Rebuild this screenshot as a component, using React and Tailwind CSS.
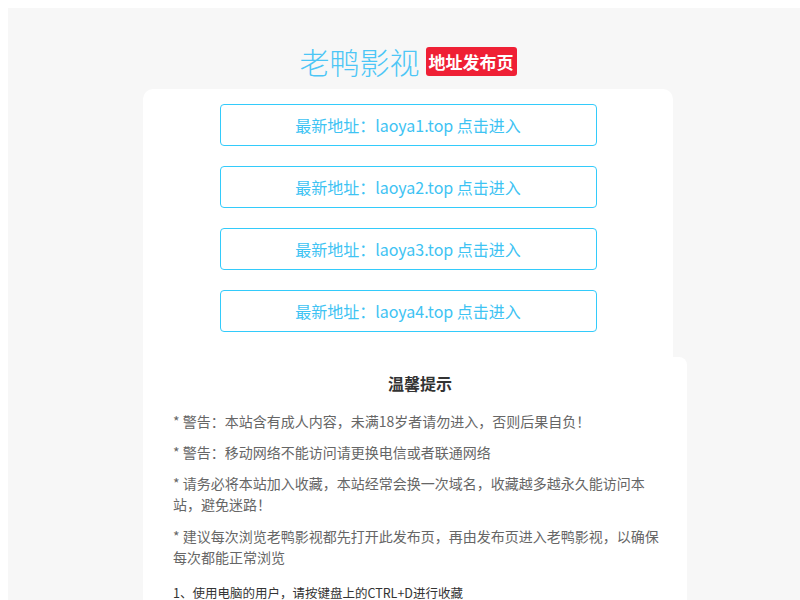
export default function App() {
  const links = ["laoya1.top", "laoya2.top", "laoya3.top", "laoya4.top"];
  return (
    <div
      className="w-[800px] h-[600px] overflow-hidden bg-white pt-2 pl-2"
      style={{ fontFamily: '"Noto Sans CJK SC", "Noto Sans", sans-serif' }}
    >
      <div className="w-[800px] min-h-[600px] bg-[#f7f7f7] flex flex-col items-center pt-[38px]">
        <div className="h-[30px] flex items-center gap-[6px] mb-[13px]">
          <span className="text-[30px] leading-none font-light text-[#4cc6f6]">老鸭影视</span>
          <span className="h-[29px] px-[3px] flex items-center rounded-[3px] bg-[#ef2035] text-white text-[17px] font-bold leading-none">
            地址发布页
          </span>
        </div>
        <div className="w-[530px] flex flex-col">
          <div className="w-[530px] bg-white rounded-t-[10px] pt-[15px] pb-[25px] flex flex-col items-center gap-[20px]">
            {links.map((l) => (
              <div
                key={l}
                className="w-[377px] h-[42px] border border-[#33cbfb] rounded-[4px] flex items-center justify-center text-[16px] text-[#3ec3f3]"
              >
                最新地址：{l} 点击进入
              </div>
            ))}
          </div>
          <div className="w-[544px] bg-white rounded-tr-[8px] pt-[15px] pl-[30px] pr-[20px] pb-4">
            <div className="text-center text-[16px] leading-[22px] font-bold text-[#333] mb-[17px]">温馨提示</div>
            <p className="text-[14px] leading-[21px] text-[#666] mb-[10px]">* 警告：本站含有成人内容，未满18岁者请勿进入，否则后果自负！</p>
            <p className="text-[14px] leading-[21px] text-[#666] mb-[10px]">* 警告：移动网络不能访问请更换电信或者联通网络</p>
            <p className="text-[14px] leading-[21px] text-[#666] mb-[11px]">* 请务必将本站加入收藏，本站经常会换一次域名，收藏越多越永久能访问本站，避免迷路！</p>
            <p className="text-[14px] leading-[21px] text-[#666] mb-[14px]">* 建议每次浏览老鸭影视都先打开此发布页，再由发布页进入老鸭影视，以确保每次都能正常浏览</p>
            <p className="text-[12.5px] leading-[21px] text-[#333]">1、使用电脑的用户，请按键盘上的CTRL+D进行收藏</p>
          </div>
        </div>
      </div>
    </div>
  );
}
